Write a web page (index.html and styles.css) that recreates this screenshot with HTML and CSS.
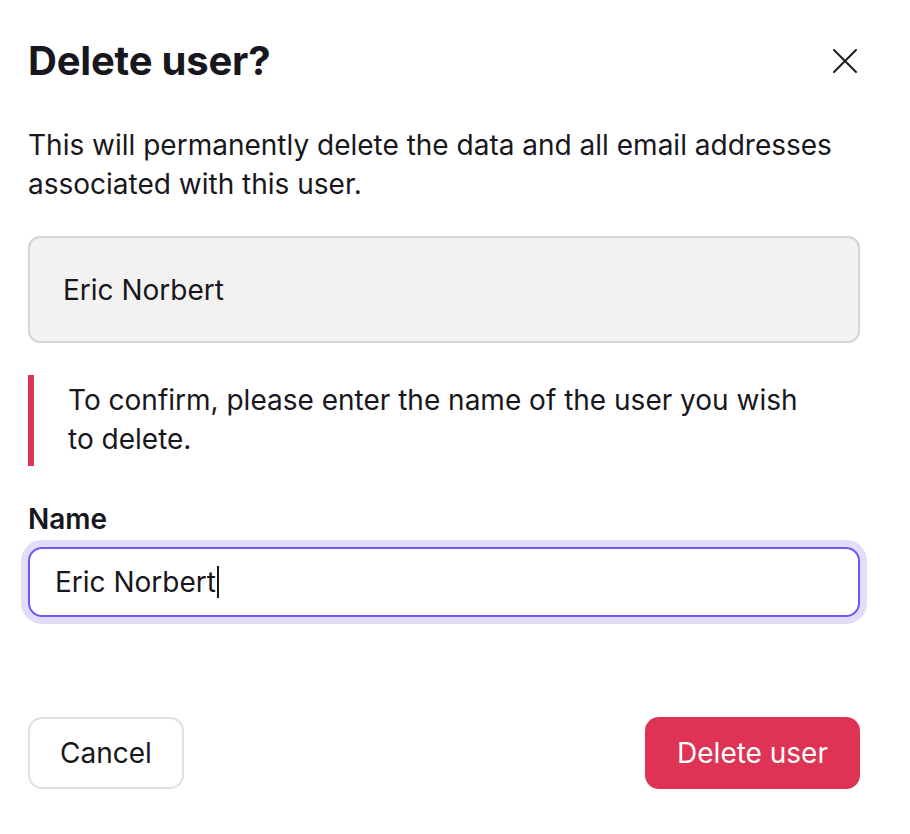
FILE: index.html
```html
<!DOCTYPE html>
<html lang="en">
<head>
    <meta charset="UTF-8">
    <meta name="viewport" content="width=device-width, initial-scale=1.0">
    <title>Delete user</title>
    <link rel="stylesheet" href="styles.css">
</head>
<body>
    <div class="dialog">
        <div class="dialog-header">
            <h1>Delete user?</h1>
            <button class="close" type="button" aria-label="Close">
                <svg width="26" height="26" viewBox="0 0 26 26" fill="none" stroke="#1c1b22" stroke-width="2" stroke-linecap="round">
                    <path d="M2 2 L24 24 M24 2 L2 24"/>
                </svg>
            </button>
        </div>
        <p class="lead">This will permanently delete the data and all email addresses associated with this user.</p>
        <div class="readonly">Eric Norbert</div>
        <div class="callout">To confirm, please enter the name of the user you wish to delete.</div>
        <label class="field-label" for="name">Name</label>
        <div class="field" id="name" role="textbox">
            <span>Eric Norbert</span><span class="caret"></span>
        </div>
        <div class="actions">
            <button class="btn btn-secondary" type="button">Cancel</button>
            <button class="btn btn-danger" type="button">Delete user</button>
        </div>
    </div>
</body>
</html>
```

FILE: styles.css
```css
body {
    margin: 0;
    background-color: #fff;
    color: #18171d;
    font-family: Inter, 'Noto Sans', sans-serif;
    font-size: 28px;
}
.dialog {
    padding: 41px 50px 0 28px;
}
.dialog-header {
    display: flex;
    justify-content: space-between;
    align-items: center;
    height: 40px;
}
h1 {
    margin: 0;
    font-size: 40px;
    font-weight: 700;
    line-height: 40px;
    letter-spacing: -0.2px;
}
.close {
    border: 0;
    background: none;
    padding: 0;
    margin-right: 2px;
    display: flex;
    cursor: pointer;
}
.lead {
    margin: 45px 0 0;
    line-height: 39px;
}
.readonly {
    margin-top: 32px;
    height: 107px;
    box-sizing: border-box;
    display: flex;
    align-items: center;
    padding-left: 33px;
    background-color: #f3f2f1;
    border: 2px solid #d6d4d2;
    border-radius: 12px;
}
.callout {
    margin-top: 32px;
    padding: 6px 40px 7px 34px;
    border-left: 6px solid #de3354;
    line-height: 39px;
}
.field-label {
    display: block;
    margin-top: 37px;
    font-weight: 600;
    line-height: 32px;
}
.field {
    margin-top: 12px;
    height: 70px;
    box-sizing: border-box;
    display: flex;
    align-items: center;
    padding-left: 25px;
    border: 2px solid #6d58f5;
    border-radius: 14px;
    box-shadow: 0 0 0 7px #e2dcfd;
}
.caret {
    display: inline-block;
    width: 2px;
    height: 32px;
    margin-left: 1px;
    background-color: #18171d;
}
.actions {
    display: flex;
    justify-content: space-between;
    margin-top: 100px;
}
.btn {
    height: 72px;
    box-sizing: border-box;
    padding: 0 32px;
    border-radius: 14px;
    font-family: inherit;
    font-size: 28px;
    cursor: pointer;
}
.btn-secondary {
    padding: 0 30px;
    background-color: #fff;
    color: #18171d;
    border: 2px solid #e3e0dd;
}
.btn-danger {
    background-color: #de3354;
    color: #fff;
    border: 0;
}
```
